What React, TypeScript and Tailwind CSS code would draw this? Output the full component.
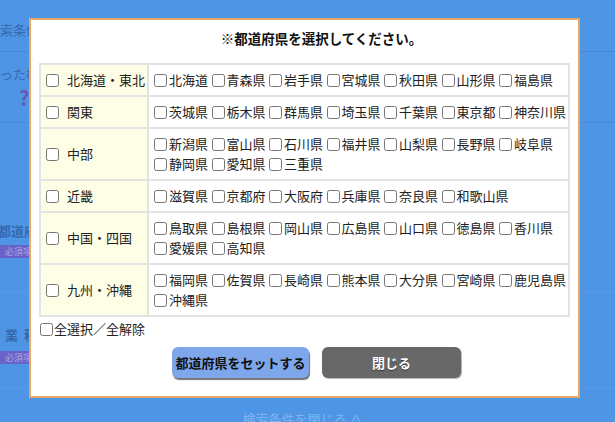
import React, { useState } from 'react';

const REGIONS: { name: string; prefs: string[] }[] = [
  { name: '北海道・東北', prefs: ['北海道', '青森県', '岩手県', '宮城県', '秋田県', '山形県', '福島県'] },
  { name: '関東', prefs: ['茨城県', '栃木県', '群馬県', '埼玉県', '千葉県', '東京都', '神奈川県'] },
  { name: '中部', prefs: ['新潟県', '富山県', '石川県', '福井県', '山梨県', '長野県', '岐阜県', '静岡県', '愛知県', '三重県'] },
  { name: '近畿', prefs: ['滋賀県', '京都府', '大阪府', '兵庫県', '奈良県', '和歌山県'] },
  { name: '中国・四国', prefs: ['鳥取県', '島根県', '岡山県', '広島県', '山口県', '徳島県', '香川県', '愛媛県', '高知県'] },
  { name: '九州・沖縄', prefs: ['福岡県', '佐賀県', '長崎県', '熊本県', '大分県', '宮崎県', '鹿児島県', '沖縄県'] },
];

const font = { fontFamily: '"Noto Sans CJK JP", "Noto Sans", sans-serif' };

const App: React.FC = () => {
  const [checked, setChecked] = useState<Record<string, boolean>>({});
  const toggle = (k: string) => setChecked({ ...checked, [k]: !checked[k] });

  return (
    <div className="relative w-full h-[422px] overflow-hidden bg-[#4f95e6] text-[#3568ad]" style={font}>
      {/* page behind the dialog */}
      <div className="h-[52px] border-b border-[#4589d8] flex items-center pt-[8px] text-[13px] whitespace-nowrap">
        <span className="-ml-[13px]">検索条件を変更する</span>
      </div>
      <div className="h-[71px] border-b border-[#4589d8] pt-[12px] text-[13px] whitespace-nowrap">
        <div className="-ml-[13px]">使った検索条件</div>
        <div className="ml-[19px] mt-[4px] text-[20px] font-bold text-[#6a55b8] leading-none">?</div>
      </div>
      <div className="h-[170px] border-b border-dotted border-[#5c9fe9] pt-[98px] text-[13px] whitespace-nowrap">
        <div className="-ml-[2px] font-bold">都道府県</div>
        <div className="mt-[4px] w-[40px] h-[13px] overflow-hidden bg-[#6a63c7] text-[#a9a4e6] text-[9px] leading-[13px] pl-[5px]">必須項目</div>
      </div>
      <div className="h-[95px] border-b border-dotted border-[#5c9fe9] pt-[32px] text-[13px] whitespace-nowrap">
        <div className="ml-[5px] font-bold">業&nbsp;&nbsp;種</div>
        <div className="mt-[6px] w-[40px] h-[13px] overflow-hidden bg-[#6a63c7] text-[#a9a4e6] text-[9px] leading-[13px] pl-[5px]">必須項目</div>
      </div>
      <div className="pt-[21px] text-center text-[13px] text-[#7fb4f0] pr-[10px]">検索条件を閉じる ∧</div>

      {/* dialog */}
      <div className="absolute left-[29px] top-[18px] w-[551px] h-[380px] bg-white border-2 border-[#e6a865] px-[8px] text-[#222] text-[13px]">
        <div className="h-[36px] flex items-center justify-center pl-[34px] font-bold text-[13.5px] text-[#111]">※都道府県を選択してください。</div>
        <div className="mt-[7px] grid grid-cols-[106px_1fr] gap-[2px] border-2 border-[#e3e3e3] bg-[#e3e3e3]">
          {REGIONS.map(r => (
            <React.Fragment key={r.name}>
              <label className="bg-[#fefde6] flex items-center pl-[5px] py-[5px] cursor-pointer whitespace-nowrap">
                <input type="checkbox" className="w-[13px] h-[13px] m-0 shrink-0" checked={!!checked[r.name]} onChange={() => toggle(r.name)} />
                <span className="ml-[8px] leading-[20px]">{r.name}</span>
              </label>
              <div className="bg-white flex flex-wrap content-start gap-x-[3.5px] pl-[5px] py-[5px]">
                {r.prefs.map(p => (
                  <label key={p} className="flex items-center h-[20px] gap-[2px] cursor-pointer whitespace-nowrap">
                    <input type="checkbox" className="w-[13px] h-[13px] m-0" checked={!!checked[p]} onChange={() => toggle(p)} />
                    <span className="leading-[20px]">{p}</span>
                  </label>
                ))}
              </div>
            </React.Fragment>
          ))}
        </div>
        <label className="flex items-center h-[22px] mt-[1px] ml-[1px] cursor-pointer">
          <input type="checkbox" className="w-[13px] h-[13px] m-0" />
          <span className="ml-[1px]">全選択／全解除</span>
        </label>
        <div className="mt-[7px] flex justify-center gap-[13px] pl-[24px]">
          <button className="w-[137px] h-[31px] rounded-[6px] bg-[#7ea6ea] text-[#111] font-bold text-[13px] shadow-[1px_2px_1px_rgba(0,0,0,0.55)]">
            都道府県をセットする
          </button>
          <button className="w-[139px] h-[31px] rounded-[6px] bg-[#686868] text-white font-bold text-[13px] shadow-[1px_1px_1px_rgba(0,0,0,0.3)] [text-shadow:0_1px_1px_rgba(0,0,0,0.5)]">
            閉じる
          </button>
        </div>
      </div>
    </div>
  );
};

export default App;
